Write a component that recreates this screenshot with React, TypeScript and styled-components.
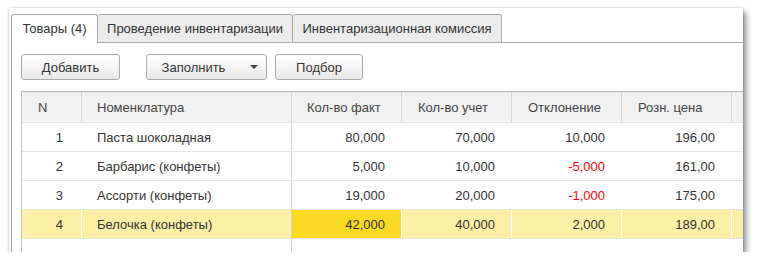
import React from "react";
import styled, { createGlobalStyle } from "styled-components";

const Global = createGlobalStyle`
  html, body { margin: 0; padding: 0; background: #ffffff; }
  body { font-family: "Liberation Sans", Arial, sans-serif; font-size: 13px; color: #333333; }
`;

const Window = styled.div`
  margin: 8px 0 0 9px;
  width: 734px;
  height: 244px;
  background: #ffffff;
  box-shadow: 3px 4px 6px rgba(0, 0, 0, 0.45), 0 0 2px rgba(0, 0, 0, 0.25);
  box-sizing: border-box;
  padding: 6px 0 0 2px;
  display: flex;
  flex-direction: column;
  overflow: hidden;
`;

const TabBar = styled.div`
  display: flex;
  align-items: flex-end;
  height: 29px;
  flex: none;
`;

const Tab = styled.div<{ $active?: boolean; $first?: boolean; $width: number }>`
  box-sizing: border-box;
  width: ${(p) => p.$width}px;
  height: 29px;
  display: flex;
  align-items: center;
  justify-content: center;
  padding-bottom: ${(p) => (p.$active ? 1 : 0)}px;
  background: ${(p) => (p.$active ? "#ffffff" : "#ececec")};
  border-top: 1px solid #a8a8a8;
  border-right: 1px solid #a8a8a8;
  border-left: ${(p) => (p.$first ? "1px solid #a8a8a8" : "none")};
  border-bottom: ${(p) => (p.$active ? "none" : "1px solid #a8a8a8")};
  border-radius: 3px 3px 0 0;
  color: #333333;
  white-space: nowrap;
`;

const TabRest = styled.div`
  flex: 1;
  height: 29px;
  box-sizing: border-box;
  border-bottom: 1px solid #a8a8a8;
`;

const Content = styled.div`
  flex: 1;
  min-height: 0;
  display: flex;
  flex-direction: column;
  border-left: 1px solid #a8a8a8;
  padding: 11px 0 0 9px;
`;

const Toolbar = styled.div`
  display: flex;
  align-items: center;
  flex: none;
`;

const Button = styled.div<{ $width: number; $gap?: number }>`
  box-sizing: border-box;
  width: ${(p) => p.$width}px;
  height: 26px;
  margin-left: ${(p) => p.$gap ?? 0}px;
  border: 1px solid #ababab;
  border-radius: 3px;
  background: linear-gradient(#ffffff, #e9e9e9);
  display: flex;
  align-items: center;
  justify-content: center;
  gap: 25px;
  padding-left: ${(p) => (p.$gap && p.$width > 110 ? 7 : 0)}px;
  color: #333333;
`;

const Arrow = styled.span`
  width: 0;
  height: 0;
  border-left: 4px solid transparent;
  border-right: 4px solid transparent;
  border-top: 4px solid #444444;
`;

const Table = styled.div`
  margin-top: 11px;
  flex: 1;
  min-height: 0;
  display: flex;
  flex-direction: column;
  border-top: 1px solid #b4b4b4;
  border-left: 1px solid #c4c4c4;
  overflow: hidden;
`;

const cols = "60px 210px 110px 110px 110px 110px 120px";

const HeaderRow = styled.div`
  display: grid;
  grid-template-columns: ${cols};
  height: 31px;
  box-sizing: border-box;
  background: #f1f1f1;
  border-bottom: 1px solid #e2e2e2;
  flex: none;
`;

const HeadCell = styled.div<{ $pad?: number }>`
  box-sizing: border-box;
  border-right: 1px solid #d4d4d4;
  display: flex;
  align-items: center;
  padding-left: ${(p) => p.$pad ?? 15}px;
  color: #444444;
  white-space: nowrap;
`;

const Row = styled.div<{ $selected?: boolean }>`
  display: grid;
  grid-template-columns: ${cols};
  height: 29px;
  box-sizing: border-box;
  border-bottom: 1px solid #e3e3e3;
  background: ${(p) => (p.$selected ? "#fbf0a6" : "#ffffff")};
  flex: none;
`;

const Cell = styled.div<{
  $right?: boolean;
  $fixed?: boolean;
  $selected?: boolean;
  $current?: boolean;
  $neg?: boolean;
  $pad?: number;
}>`
  box-sizing: border-box;
  display: flex;
  align-items: center;
  justify-content: ${(p) => (p.$right ? "flex-end" : "flex-start")};
  padding: ${(p) => (p.$right ? `0 ${p.$pad ?? 16}px 0 0` : `0 0 0 ${p.$pad ?? 15}px`)};
  border-right: 1px solid
    ${(p) => (p.$fixed ? "#d0d0d0" : p.$selected ? "#ffffff" : "transparent")};
  background: ${(p) => (p.$current ? "#f9d923" : "transparent")};
  color: ${(p) => (p.$neg ? "#ff0000" : "#333333")};
  white-space: nowrap;
`;

const Filler = styled.div`
  flex: 1;
  display: grid;
  grid-template-columns: ${cols};
`;

const FillerCell = styled.div<{ $fixed?: boolean }>`
  border-right: 1px solid ${(p) => (p.$fixed ? "#d0d0d0" : "transparent")};
`;

type Item = {
  n: number;
  name: string;
  fact: string;
  acc: string;
  dev: string;
  price: string;
};

const items: Item[] = [
  { n: 1, name: "Паста шоколадная", fact: "80,000", acc: "70,000", dev: "10,000", price: "196,00" },
  { n: 2, name: "Барбарис (конфеты)", fact: "5,000", acc: "10,000", dev: "-5,000", price: "161,00" },
  { n: 3, name: "Ассорти (конфеты)", fact: "19,000", acc: "20,000", dev: "-1,000", price: "175,00" },
  { n: 4, name: "Белочка (конфеты)", fact: "42,000", acc: "40,000", dev: "2,000", price: "189,00" },
];

export default function App() {
  const selectedN = 4;
  return (
    <>
      <Global />
      <Window>
        <TabBar>
          <Tab $active $first $width={87}>Товары (4)</Tab>
          <Tab $width={195}>Проведение инвентаризации</Tab>
          <Tab $width={209}>Инвентаризационная комиссия</Tab>
          <TabRest />
        </TabBar>
        <Content>
          <Toolbar>
            <Button $width={99}>Добавить</Button>
            <Button $width={121} $gap={26}>
              Заполнить
              <Arrow />
            </Button>
            <Button $width={88} $gap={8}>Подбор</Button>
          </Toolbar>
          <Table>
            <HeaderRow>
              <HeadCell $pad={16}>N</HeadCell>
              <HeadCell>Номенклатура</HeadCell>
              <HeadCell>Кол-во факт</HeadCell>
              <HeadCell $pad={16}>Кол-во учет</HeadCell>
              <HeadCell $pad={16}>Отклонение</HeadCell>
              <HeadCell $pad={16}>Розн. цена</HeadCell>
              <HeadCell />
            </HeaderRow>
            {items.map((it) => {
              const sel = it.n === selectedN;
              return (
                <Row key={it.n} $selected={sel}>
                  <Cell $right $pad={18} $selected={sel}>{it.n}</Cell>
                  <Cell $fixed $selected={sel}>{it.name}</Cell>
                  <Cell $right $selected={sel} $current={sel}>{it.fact}</Cell>
                  <Cell $right $selected={sel}>{it.acc}</Cell>
                  <Cell $right $selected={sel} $neg={it.dev.startsWith("-")}>{it.dev}</Cell>
                  <Cell $right $selected={sel}>{it.price}</Cell>
                  <Cell $selected={sel} />
                </Row>
              );
            })}
            <Filler>
              <FillerCell />
              <FillerCell $fixed />
            </Filler>
          </Table>
        </Content>
      </Window>
    </>
  );
}
